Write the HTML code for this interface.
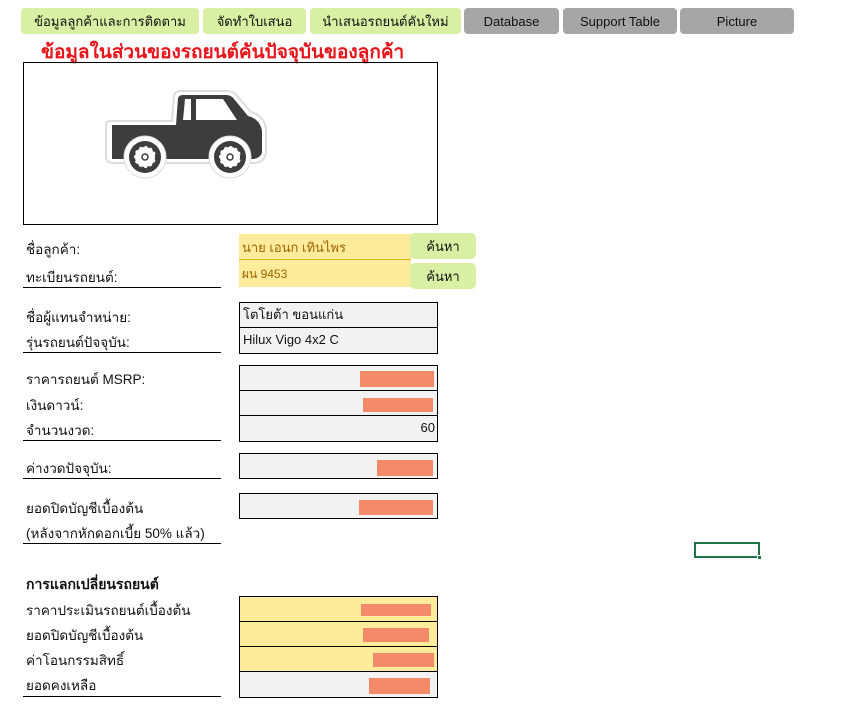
<!DOCTYPE html>
<html><head><meta charset="utf-8">
<style>
*{margin:0;padding:0;box-sizing:border-box}
body{width:841px;height:708px;background:#fff;position:relative;overflow:hidden;font-family:"Tahoma","Liberation Sans","DejaVu Sans",sans-serif;font-size:13px;color:#111}
.a{position:absolute}
.tab{position:absolute;top:8px;height:26px;border-radius:4px;display:flex;align-items:center;justify-content:center;font-size:13px;color:#111}
.g{background:#d9efa3}
.gr{background:#a6a6a6}
.lbl{position:absolute;left:26px;font-size:13.5px;white-space:nowrap}
.ul{position:absolute;left:23px;width:198px;height:1px;background:#000}
.box{position:absolute;left:239px;width:199px;border:1px solid #000;background:#f2f2f2}
.cell{height:25px;border-bottom:1px solid #000;position:relative;font-size:13px;padding-left:3px;line-height:24px}
.cell:last-child{border-bottom:none}
.y{background:#ffeb9c}
.or{position:absolute;background:#f38a69}
.btn{position:absolute;left:410px;width:66px;height:26px;background:#d9efa3;border-radius:5px;display:flex;align-items:center;justify-content:center;font-size:13px}
</style></head><body>
<div class="tab g" style="left:21px;width:178px">ข้อมูลลูกค้าและการติดตาม</div>
<div class="tab g" style="left:203px;width:103px">จัดทำใบเสนอ</div>
<div class="tab g" style="left:310px;width:151px">นำเสนอรถยนต์คันใหม่</div>
<div class="tab gr" style="left:464px;width:95px">Database</div>
<div class="tab gr" style="left:563px;width:114px">Support Table</div>
<div class="tab gr" style="left:680px;width:114px">Picture</div>

<div class="a" style="left:41px;top:37px;font-size:19px;font-weight:bold;color:#e8151b;white-space:nowrap">ข้อมูลในส่วนของรถยนต์คันปัจจุบันของลูกค้า</div>

<div class="a" style="left:23px;top:62px;width:415px;height:163px;border:1px solid #000"></div>
<svg class="a" style="left:105px;top:88px" width="162" height="92" viewBox="0 0 162 92">
<path d="M5 33 L67 33 L69 8 Q70 3 76 3 L122 3 Q128 3 132 8 L146 24 Q160 28 161 42 L161 64 Q160 74 150 75 L6 75 Q1 74 1 68 L1 37 Q1 33 5 33Z" fill="#fff" stroke="#ddd" stroke-width="2"/>
<path d="M7 37 L71 37 L73 10 Q74 7 78 7 L121 7 Q126 7 129 11 L143 28 Q155 31 157 43 L157 64 Q156 70 148 71 L7 71Z" fill="#3d3d3d"/>
<path d="M80 11 L86 11 L86 32 L78 32Z M91 11 L118 11 L132 32 L91 32Z" fill="#fff"/>
<circle cx="40" cy="69" r="21" fill="#fff" stroke="#ddd" stroke-width="1"/><circle cx="40" cy="69" r="16" fill="#3d3d3d"/><circle cx="40" cy="69" r="11" fill="#fff" stroke="#3d3d3d" stroke-width="2" stroke-dasharray="3 3"/><circle cx="40" cy="69" r="3" fill="none" stroke="#3d3d3d" stroke-width="1.5"/>
<circle cx="125" cy="69" r="21" fill="#fff" stroke="#ddd" stroke-width="1"/><circle cx="125" cy="69" r="16" fill="#3d3d3d"/><circle cx="125" cy="69" r="11" fill="#fff" stroke="#3d3d3d" stroke-width="2" stroke-dasharray="3 3"/><circle cx="125" cy="69" r="3" fill="none" stroke="#3d3d3d" stroke-width="1.5"/>
</svg>

<div class="lbl" style="top:238px">ชื่อลูกค้า:</div>
<div class="lbl" style="top:266px">ทะเบียนรถยนต์:</div>
<div class="ul" style="top:287px"></div>
<div class="a y" style="left:239px;top:234px;width:172px;height:26px;border-bottom:1px solid #e0b800;color:#9c6500;padding:3px 0 0 3px">นาย เอนก เทินไพร</div>
<div class="a y" style="left:239px;top:260px;width:172px;height:27px;color:#9c6500;padding:5px 0 0 3px;font-size:12px">ผน 9453</div>
<div class="btn" style="top:233px">ค้นหา</div>
<div class="btn" style="top:263px">ค้นหา</div>

<div class="lbl" style="top:306px">ชื่อผู้แทนจำหน่าย:</div>
<div class="lbl" style="top:331px">รุ่นรถยนต์ปัจจุบัน:</div>
<div class="ul" style="top:352px"></div>
<div class="box" style="top:302px"><div class="cell">โตโยต้า ขอนแก่น</div><div class="cell">Hilux Vigo 4x2 C</div></div>

<div class="lbl" style="top:368px">ราคารถยนต์ MSRP:</div>
<div class="lbl" style="top:394px">เงินดาวน์:</div>
<div class="lbl" style="top:419px">จำนวนงวด:</div>
<div class="ul" style="top:440px"></div>
<div class="box" style="top:365px"><div class="cell"></div><div class="cell"></div><div class="cell" style="text-align:right;padding-right:2px">60</div></div>
<div class="or" style="left:360px;top:371px;width:74px;height:16px"></div>
<div class="or" style="left:363px;top:398px;width:70px;height:14px"></div>

<div class="lbl" style="top:457px">ค่างวดปัจจุบัน:</div>
<div class="ul" style="top:478px"></div>
<div class="box" style="top:453px;height:26px"></div>
<div class="or" style="left:377px;top:460px;width:56px;height:16px"></div>

<div class="lbl" style="top:497px">ยอดปิดบัญชีเบื้องต้น</div>
<div class="lbl" style="top:522px">(หลังจากหักดอกเบี้ย 50% แล้ว)</div>
<div class="ul" style="top:543px"></div>
<div class="box" style="top:493px;height:26px"></div>
<div class="or" style="left:359px;top:500px;width:74px;height:15px"></div>

<div class="a" style="left:694px;top:542px;width:66px;height:16px;border:2px solid #217346"></div>
<div class="a" style="left:757px;top:555px;width:5px;height:5px;background:#217346;border:1px solid #fff"></div>

<div class="lbl" style="top:574px;font-weight:bold;font-size:14px">การแลกเปลี่ยนรถยนต์</div>
<div class="lbl" style="top:599px">ราคาประเมินรถยนต์เบื้องต้น</div>
<div class="lbl" style="top:624px">ยอดปิดบัญชีเบื้องต้น</div>
<div class="lbl" style="top:649px">ค่าโอนกรรมสิทธิ์</div>
<div class="lbl" style="top:674px">ยอดคงเหลือ</div>
<div class="ul" style="top:696px"></div>
<div class="box" style="top:596px"><div class="cell y"></div><div class="cell y"></div><div class="cell y"></div><div class="cell"></div></div>
<div class="or" style="left:361px;top:604px;width:70px;height:12px"></div>
<div class="or" style="left:363px;top:628px;width:66px;height:14px"></div>
<div class="or" style="left:373px;top:653px;width:61px;height:14px"></div>
<div class="or" style="left:369px;top:678px;width:61px;height:16px"></div>
</body></html>
